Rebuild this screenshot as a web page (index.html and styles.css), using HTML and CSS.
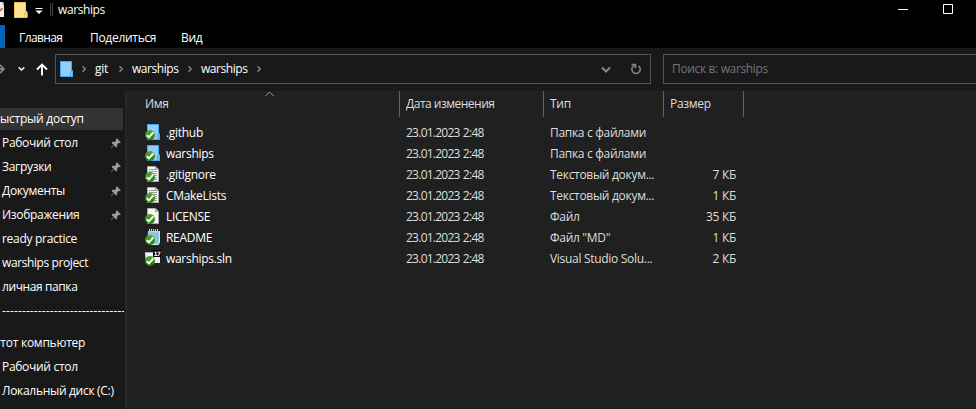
FILE: index.html
```html
<!DOCTYPE html>
<html lang="ru">
<head>
<meta charset="utf-8">
<title>warships</title>
<link rel="stylesheet" href="styles.css">
</head>
<body>
<svg class="defs" width="0" height="0">
  <defs>
    <linearGradient id="green" x1="0" y1="0" x2="0" y2="1"><stop offset="0" stop-color="#5aa832"/><stop offset="1" stop-color="#167d0c"/></linearGradient>
    <symbol id="check" viewBox="0 0 16 16"><circle cx="5" cy="11" r="5" fill="url(#green)"/><path d="M1.800 11.200l2.200 2.200 4.300-5" fill="none" stroke="#fff" stroke-width="2"/></symbol>
    <symbol id="folder" viewBox="0 0 16 16"><path d="M2.500.500h11v9h1v6h-12z" fill="#93cdfb" stroke="#46a9f2"/><path d="M12.500 15.500v-5h2v5z" fill="#83c6fb" stroke="#46a9f2"/></symbol>
    <symbol id="page" viewBox="0 0 16 16"><path d="M2.500.500h8l3 3v12h-11z" fill="#f7f7f7" stroke="#aaa"/><path d="M10.500.500v3h3" fill="#ddd" stroke="#999"/></symbol>
    <symbol id="text" viewBox="0 0 16 16"><use href="#page"/><path d="M4 3.500h6M4 5.500h8M4 7.500h8M4 9.500h8M4 11.500h8M4 13.500h8" stroke="#999"/></symbol>
    <symbol id="note" viewBox="0 0 16 16"><path d="M3 2h12l-1 13H2z" fill="#9acbdc"/><path d="M4 5h10M4 7h10M4 9h9M4 11h9M4 13h9" stroke="#78b1c8" stroke-width=".6"/><path d="M14.500 2v11l-1 2.500H5" fill="none" stroke="#d6ebf2"/><path d="M4.500 0v3M6.500 0v3M8.500 0v3M10.500 0v3M12.500 0v3" stroke="#c7dde5"/></symbol>
    <symbol id="pin" viewBox="0 0 12 12"><path d="M6.500 1L11 5.500 9.700 6 8.600 6l-1.500 1.600.1 1.900-1 1L4 8.300 1.300 11 .8 11.200 1 10.500 3.700 7.900 1.500 5.700l1-.9 2.100.2L6.200 3.400 6 2.200z" fill="#929da5"/></symbol>
    <symbol id="sep" viewBox="0 0 6 8"><path d="M1.500 1.200L4.300 4 1.500 6.800" fill="none" stroke="#858585" stroke-width="1.400"/></symbol>
  </defs>
</svg>
<div class="window">
  <header class="title">
    <svg class="props" width="5" height="18" viewBox="0 0 5 18"><path d="M0 2h3l1 2v13H0z" fill="#eee"/><path d="M3 2v3h1" fill="none" stroke="#999"/><path d="M0 11l2.500-3" stroke="#d95c35" stroke-width="1.500"/></svg>
    <svg class="yellow" width="14" height="16" viewBox="0 0 14 16"><path d="M.5.5h11v9h1.500v6H.5z" fill="#ffe391" stroke="#f2ca50"/><path d="M10.500 15.500v-5H13v5z" fill="#ffe18a" stroke="#edc348"/></svg>
    <svg class="custom" width="8" height="8" viewBox="0 0 8 8"><path d="M.5 1.500h7" stroke="#fff"/><path d="M.5 3.500h7L4 7z" fill="#fff"/></svg>
    <i class="divider"></i>
    <h1>warships</h1>
    <svg class="minimize" width="10" height="10"><path d="M0 5.500h10" stroke="#fff"/></svg>
    <svg class="maximize" width="10" height="10"><path d="M.5.500h9v9h-9z" fill="none" stroke="#fff"/></svg>
  </header>
  <nav class="tabs"><i class="file"></i><span class="home">Главная</span><span class="share">Поделиться</span><span class="view">Вид</span></nav>
  <div class="bar">
    <svg class="forward" width="5" height="10"><path d="M-3 5H3M0 1l4 4-4 4" fill="none" stroke="#818181" stroke-width="1.800"/></svg>
    <svg class="recent" width="7" height="6"><path d="M.7 1.200l2.800 2.800 2.800-2.800" fill="none" stroke="#eee" stroke-width="1.600"/></svg>
    <svg class="up" width="12" height="13"><path d="M6 12.500V2M1 6.500l5-5 5 5" fill="none" stroke="#fff" stroke-width="1.900"/></svg>
    <div class="address">
      <svg width="16" height="16"><use href="#folder"/></svg>
      <svg class="s1" width="6" height="8"><use href="#sep"/></svg><span class="git">git</span>
      <svg class="s2" width="6" height="8"><use href="#sep"/></svg><span class="crumb">warships</span>
      <svg class="s2" width="6" height="8"><use href="#sep"/></svg><span class="crumb">warships</span>
      <svg class="s2" width="6" height="8"><use href="#sep"/></svg>
      <svg class="drop" width="10" height="8"><path d="M1 1.500l4 4 4-4" fill="none" stroke="#858585" stroke-width="2"/></svg>
      <span class="refresh"><svg width="12" height="12"><path d="M8.500 2.800A4.200 4.200 0 1 1 2.800 3.600M1.500 1.500h4v3.700M5.500 1.500L2.800 3.800" fill="none" stroke="#858585" stroke-width="1.500"/></svg></span>
    </div>
    <div class="search">Поиск в: warships</div>
  </div>
  <div class="body">
    <aside>
      <div class="item active"><span class="quick">Быстрый доступ</span></div>
      <div class="item"><span>Рабочий стол</span><svg width="12" height="12"><use href="#pin"/></svg></div>
      <div class="item"><span>Загрузки</span><svg width="12" height="12"><use href="#pin"/></svg></div>
      <div class="item"><span>Документы</span><svg width="12" height="12"><use href="#pin"/></svg></div>
      <div class="item"><span>Изображения</span><svg width="12" height="12"><use href="#pin"/></svg></div>
      <div class="item"><span>ready practice</span></div>
      <div class="item"><span class="project">warships project</span></div>
      <div class="item"><span class="project">личная папка</span></div>
      <div class="item dashes"><span>-------------------------------</span></div>
      <div class="item pc"><span class="quick">Этот компьютер</span></div>
      <div class="item"><span>Рабочий стол</span></div>
      <div class="item"><span>Локальный диск (C:)</span></div>
    </aside>
    <main>
      <div class="head"><span class="name">Имя<svg class="sort" width="9" height="6"><path d="M.5 5l4-4 4 4" fill="none" stroke="#999"/></svg></span><span class="changed">Дата изменения</span><span>Тип</span><span>Размер</span></div>
      <div class="row"><svg width="16" height="16"><use href="#folder"/><use href="#check"/></svg><b>.github</b><span class="date">23.01.2023 2:48</span><span>Папка с файлами</span><em></em></div>
      <div class="row"><svg width="16" height="16"><use href="#folder"/><use href="#check"/></svg><b>warships</b><span class="date">23.01.2023 2:48</span><span>Папка с файлами</span><em></em></div>
      <div class="row"><svg width="16" height="16"><use href="#text"/><use href="#check"/></svg><b>.gitignore</b><span class="date">23.01.2023 2:48</span><span>Текстовый докум...</span><em>7 КБ</em></div>
      <div class="row"><svg width="16" height="16"><use href="#text"/><use href="#check"/></svg><b>CMakeLists</b><span class="date">23.01.2023 2:48</span><span>Текстовый докум...</span><em>1 КБ</em></div>
      <div class="row"><svg width="16" height="16"><use href="#page"/><use href="#check"/></svg><b>LICENSE</b><span class="date">23.01.2023 2:48</span><span>Файл</span><em>35 КБ</em></div>
      <div class="row"><svg width="16" height="16"><use href="#note"/><use href="#check"/></svg><b>README</b><span class="date">23.01.2023 2:48</span><span>Файл "MD"</span><em>1 КБ</em></div>
      <div class="row"><svg width="16" height="16"><path d="M0 3h15v10H1z" fill="#f3f3f3"/><path d="M0 2.500h8" stroke="#aaa"/><path d="M8 0h8v7H8z" fill="#000"/><text class="version" x="8.500" y="6">17</text><use href="#check"/></svg><b>warships.sln</b><span class="date">23.01.2023 2:48</span><span>Visual Studio Solu...</span><em>2 КБ</em></div>
    </main>
  </div>
</div>
</body>
</html>
```
FILE: styles.css
```css
* { box-sizing: border-box; }
body { margin: 0; background: #202020; color: #fff; font: 12px/20px "Open Sans", "Noto Sans", sans-serif; letter-spacing: -.3px; }
svg { display: block; flex: none; }
.defs { position: absolute; }
.window { width: 976px; height: 409px; overflow: hidden; }
.window span, h1, b, .search { white-space: nowrap; }
.title { display: flex; height: 25px; background: #000; }
.yellow { margin: 2px 0 0 9px; }
.custom { margin: 7px 0 0 7px; }
.divider { width: 3px; height: 13px; margin: 3px 5px 0 7px; border: solid #444; border-width: 0 1px; }
h1 { margin: 0; font-size: 12px; font-weight: 400; line-height: 20px; letter-spacing: -.4px; }
.minimize { margin: 4px 35px 0 auto; }
.maximize { margin: 4px 23px 0 0; }
.tabs { display: flex; height: 23px; background: #000; line-height: 25px; }
.file { width: 5px; background: #0067b8; }
.home { width: 71px; margin-left: 14px; letter-spacing: -.75px; }
.home { letter-spacing: -.6px; }
.share { width: 91px; }
.bar { display: flex; height: 43px; padding-top: 6px; background: #191919; }
.forward { margin-top: 10px; }
.recent { margin: 12px 0 0 13px; }
.up { margin: 9px 7px 0 11px; }
.address { display: flex; flex: none; align-items: center; width: 596px; height: 30px; border: 1px solid #535353; padding-left: 2px; }
.s1 { margin-left: 7px; }
.git { width: 17px; margin-left: 8px; }
.s2 { margin-left: 6px; }
.crumb { width: 49px; margin-left: 8px; letter-spacing: -.45px; }
.drop { margin: 2px 0 0 auto; }
.refresh { display: flex; align-items: center; justify-content: center; width: 30px; height: 28px; margin-left: 9px; border-left: 1px solid #151515; }
.search { flex: none; width: 330px; height: 30px; margin-left: 12px; padding-left: 8px; border: 1px solid #535353; color: #757575; line-height: 28px; letter-spacing: -.35px; }
.body { display: flex; height: 318px; }
aside { width: 127px; padding-top: 16px; background: #191919; border-right: 2px solid #272727; overflow: hidden; }
.item { display: flex; align-items: center; width: 123px; height: 24px; padding-left: 2px; }
.item svg { margin: 0 1px 0 auto; }
.active { height: 22px; margin: 1px 0; background: #333; }
.quick { margin-left: -9px; letter-spacing: -.25px; }
.project { letter-spacing: -.4px; }
.dashes { width: 124px; overflow: hidden; letter-spacing: .12px; }
.pc { margin-top: 8px; }
main { flex: 1; color: #dedede; }
.head { display: grid; grid-template-columns: 273px 144px 120px 80px; height: 25px; margin-bottom: 6px; line-height: 26px; }
.head span { border-right: 1px solid #636363; padding-left: 6px; }
.head .name { position: relative; padding-left: 18px; }
.head .changed { letter-spacing: -.5px; }
.sort { position: absolute; left: 138px; top: 0; }
.row { display: grid; grid-template-columns: 21px 240px 144px 112px 74px; align-items: center; height: 21px; padding-left: 18px; }
.row svg { margin-top: -1px; }
.date { letter-spacing: -.75px; word-spacing: .8px; }
b { font-weight: 400; color: #fff; }
em { font-style: normal; text-align: right; }
.version { fill: #fff; font: bold 6px "DejaVu Sans", sans-serif; letter-spacing: -1px; }
```
